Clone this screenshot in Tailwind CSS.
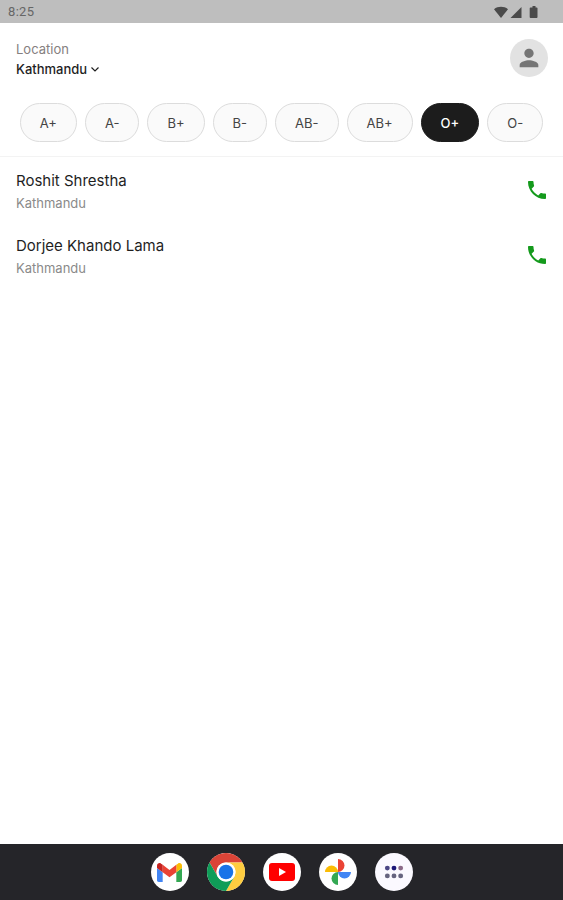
<!DOCTYPE html>
<html lang="en">
<head>
  <meta charset="UTF-8">
  <meta name="viewport" content="width=device-width, initial-scale=1.0">
  <title>Blood Donors</title>
  <script src="https://cdn.jsdelivr.net/npm/@tailwindcss/browser@4"></script>
</head>
<body class="min-h-screen flex flex-col bg-white font-['Inter',sans-serif]">

  <!-- status bar -->
  <div class="h-[23px] bg-[#bebebe] flex items-center justify-between pl-2 pr-[22px] text-[#666]">
    <span class="text-[13px] leading-4 font-['Roboto',sans-serif] tracking-wide">8:25</span>
    <div class="flex items-center gap-[2px] text-[#4a4a4a]">
      <svg class="w-[14px] h-3" viewBox="0 0 14 12" fill="currentColor"><path d="M0 3.2C4 0 10 0 14 3.2L7 12z"/></svg>
      <svg class="w-3 h-3" viewBox="0 0 11 12" fill="currentColor"><path d="M11 1v11H0z"/></svg>
      <svg class="w-[17px] h-3" viewBox="0 0 14 12" fill="currentColor"><path d="M5 1.500h2V0h3v1.500h1.200c.5 0 .8.3.8.8V11c0 .6-.3 1-.8 1H5c-.5 0-.8-.4-.8-1V2.300c0-.5.3-.8.8-.8z"/></svg>
    </div>
  </div>

  <header class="border-b border-[#f3f3f3] pt-4 pb-[14px]">
    <div class="flex items-start justify-between pl-4 pr-[15px]">
      <div class="flex flex-col text-[#1f1f1f]">
        <label for="location" class="text-[13px] leading-5 text-[#858080]">Location</label>
        <div class="flex items-center gap-[2px]">
          <select id="location" class="appearance-none bg-transparent text-[13px] leading-5 font-medium">
            <option>Kathmandu</option>
          </select>
          <svg class="w-[10px] h-[10px]" viewBox="0 0 10 10" fill="none" stroke="currentColor" stroke-width="1.2"><path d="M1.500 3.500L5 7l3.500-3.500"/></svg>
        </div>
      </div>
      <button aria-label="Profile" class="size-[38px] rounded-full bg-[#e2e2e2] flex items-center justify-center text-[#757575]">
        <svg class="size-7" viewBox="0 0 24 24" fill="currentColor"><path d="M12 12c2.210 0 4-1.790 4-4s-1.790-4-4-4-4 1.790-4 4 1.790 4 4 4zm0 2c-2.670 0-8 1.340-8 4v2h16v-2c0-2.660-5.330-4-8-4z"/></svg>
      </button>
    </div>

    <!-- blood groups -->
    <div class="mt-6 flex justify-center gap-2 text-[13px] leading-5 text-[#444]">
      <button class="h-[39px] px-[19px] rounded-full border border-[#dcdcdc] bg-[#fafafa]">A+</button>
      <button class="h-[39px] px-[19px] rounded-full border border-[#dcdcdc] bg-[#fafafa]">A-</button>
      <button class="h-[39px] px-[19px] rounded-full border border-[#dcdcdc] bg-[#fafafa]">B+</button>
      <button class="h-[39px] px-[19px] rounded-full border border-[#dcdcdc] bg-[#fafafa]">B-</button>
      <button class="h-[39px] px-[19px] rounded-full border border-[#dcdcdc] bg-[#fafafa]">AB-</button>
      <button class="h-[39px] px-[19px] rounded-full border border-[#dcdcdc] bg-[#fafafa]">AB+</button>
      <button aria-pressed="true" class="h-[39px] px-[19px] rounded-full border border-[#1c1c1c] bg-[#1c1c1c] text-white font-medium">O+</button>
      <button class="h-[39px] px-[19px] rounded-full border border-[#dcdcdc] bg-[#fafafa]">O-</button>
    </div>
  </header>

  <main class="flex-1">
    <ul>
      <li class="flex items-center justify-between px-4 py-[9px]">
        <div class="pt-[3px]">
          <p class="text-[15px] leading-6 text-[#1f1f1f]">Roshit Shrestha</p>
          <p class="text-[13px] leading-5 text-[#8a8a8a]">Kathmandu</p>
        </div>
        <button aria-label="Call Roshit Shrestha" class="text-[#149a1c]">
          <svg class="size-6 -mr-[2px]" viewBox="0 0 24 24" fill="currentColor"><path d="M6.620 10.790c1.440 2.830 3.760 5.140 6.590 6.590l2.200-2.200c.27-.27.67-.36 1.020-.24 1.120.37 2.330.57 3.570.57.55 0 1 .45 1 1V20c0 .55-.45 1-1 1-9.390 0-17-7.610-17-17 0-.55.45-1 1-1h3.500c.55 0 1 .45 1 1 0 1.250.2 2.450.57 3.570.11.35.03.74-.25 1.020l-2.200 2.200z"/></svg>
        </button>
      </li>
      <li class="flex items-center justify-between px-4 py-[9px]">
        <div class="pt-[3px]">
          <p class="text-[15px] leading-6 text-[#1f1f1f]">Dorjee Khando Lama</p>
          <p class="text-[13px] leading-5 text-[#8a8a8a]">Kathmandu</p>
        </div>
        <button aria-label="Call Dorjee Khando Lama" class="text-[#149a1c]">
          <svg class="size-6 -mr-[2px]" viewBox="0 0 24 24" fill="currentColor"><path d="M6.620 10.790c1.440 2.830 3.760 5.140 6.590 6.590l2.200-2.200c.27-.27.67-.36 1.020-.24 1.120.37 2.330.57 3.570.57.55 0 1 .45 1 1V20c0 .55-.45 1-1 1-9.390 0-17-7.610-17-17 0-.55.45-1 1-1h3.500c.55 0 1 .45 1 1 0 1.250.2 2.450.57 3.570.11.35.03.74-.25 1.020l-2.200 2.200z"/></svg>
        </button>
      </li>
    </ul>
  </main>

  <!-- dock -->
  <nav class="h-14 bg-[#252529] flex items-center justify-center gap-[18px]">
    <button aria-label="Gmail" class="size-[38px] rounded-full bg-white flex items-center justify-center">
      <svg class="w-[25px] h-[19px]" viewBox="52 42 88 66">
        <path fill="#4285f4" d="M58 108h14V74L52 59v43c0 3.320 2.690 6 6 6"/>
        <path fill="#34a853" d="M120 108h14c3.320 0 6-2.690 6-6V59l-20 15"/>
        <path fill="#fbbc04" d="M120 48v26l20-15v-8c0-7.420-8.470-11.650-14.400-7.200"/>
        <path fill="#ea4335" d="M72 74V48l24 18 24-18v26L96 92"/>
        <path fill="#c5221f" d="M52 51v8l20 15V48l-5.600-4.200c-5.940-4.450-14.400-.22-14.400 7.200"/>
      </svg>
    </button>
    <button aria-label="Chrome" class="size-[38px] rounded-full">
      <svg class="size-[38px]" viewBox="0 0 48 48">
        <circle cx="24" cy="24" r="24" fill="#fff"/>
        <path fill="#db4437" d="M3.220 12A24 24 0 0 1 44.780 12H24A12 12 0 0 0 13.610 30z"/>
        <path fill="#ffcd40" d="M44.780 12A24 24 0 0 1 24 48L34.390 30A12 12 0 0 0 24 12z"/>
        <path fill="#0f9d58" d="M24 48A24 24 0 0 1 3.220 12L13.610 30A12 12 0 0 0 34.390 30z"/>
        <circle cx="24" cy="24" r="12" fill="#fff"/>
        <circle cx="24" cy="24" r="9.200" fill="#1a73e8"/>
      </svg>
    </button>
    <button aria-label="YouTube" class="size-[38px] rounded-full bg-white flex items-center justify-center">
      <svg class="w-[26px] h-[18px]" viewBox="0 0 26 18"><rect width="26" height="18" rx="3" fill="#f00"/><path fill="#fff" d="M10 5l7 4-7 4z"/></svg>
    </button>
    <button aria-label="Photos" class="size-[38px] rounded-full bg-white flex items-center justify-center">
      <svg class="size-[26px]" viewBox="0 0 26 26">
        <path fill="#ea4335" d="M13 0a6.500 6.500 0 0 1 0 13z"/>
        <path fill="#4285f4" d="M26 13a6.500 6.500 0 0 1-13 0z"/>
        <path fill="#34a853" d="M13 26a6.500 6.500 0 0 1 0-13z"/>
        <path fill="#fbbc04" d="M0 13a6.500 6.500 0 0 1 13 0z"/>
      </svg>
    </button>
    <button aria-label="All apps" class="size-[38px] rounded-full bg-[#fbf9ff] flex items-center justify-center">
      <svg class="w-5 h-[14px]" viewBox="0 0 18 12">
        <circle cx="3" cy="2.500" r="2.200" fill="#4b4685"/>
        <circle cx="9" cy="2.500" r="2.200" fill="#1d1878"/>
        <circle cx="15" cy="2.500" r="2.200" fill="#8b6a88"/>
        <circle cx="3" cy="9.500" r="2.200" fill="#66647f"/>
        <circle cx="9" cy="9.500" r="2.200" fill="#66647f"/>
        <circle cx="15" cy="9.500" r="2.200" fill="#66647f"/>
      </svg>
    </button>
  </nav>

</body>
</html>
